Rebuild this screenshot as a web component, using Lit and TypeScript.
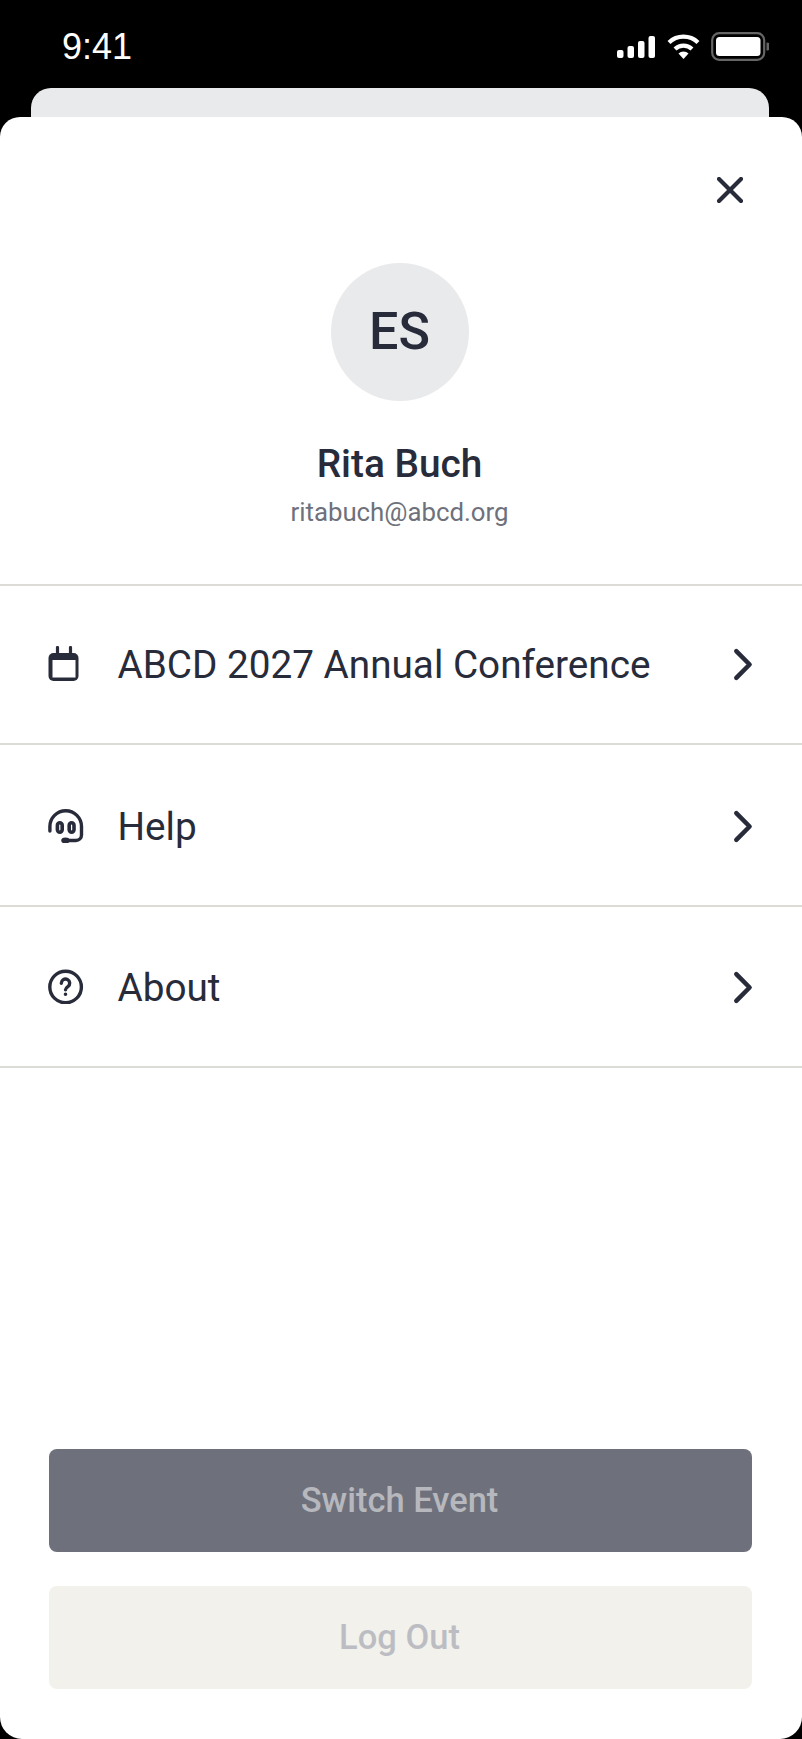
import { LitElement, html, css } from "lit";
import { customElement } from "lit/decorators.js";

const chevron = html`<svg class="chev" width="22" height="33" viewBox="0 0 22 33" fill="none" stroke="#282b3a" stroke-width="4.5" stroke-linecap="round" stroke-linejoin="round"><path d="M4.3 3.2L17.6 16.5L4.3 29.8"/></svg>`;

const icons = {
  calendar: html`<svg width="36" height="36" viewBox="0 0 36 36" fill="none"><path d="M9.5 1.5V9M22.5 1.5V9" stroke="#282b3a" stroke-width="3.2" stroke-linecap="round"/><rect x="0.5" y="7" width="30" height="28" rx="5" fill="#282b3a"/><rect x="4.5" y="14" width="23" height="17.5" fill="#fff"/></svg>`,
  headset: html`<svg width="36" height="36" viewBox="0 0 36 36" fill="none" stroke="#282b3a" stroke-width="3.4" stroke-linecap="round"><path d="M1.9 24V19.5a15.8 15.8 0 0 1 31.6 0V28a5.5 5.5 0 0 1-5.5 5.5H18"/><rect x="9.4" y="15.8" width="4.8" height="9.4" rx="2.4" stroke-width="3.6"/><rect x="21.2" y="15.8" width="4.8" height="9.4" rx="2.4" stroke-width="3.6"/><ellipse cx="17.5" cy="33.5" rx="2.8" ry="1.4" fill="#282b3a" stroke-width="3"/></svg>`,
  help: html`<svg width="36" height="36" viewBox="0 0 36 36" fill="none" stroke="#282b3a" stroke-width="3.4" stroke-linecap="round" stroke-linejoin="round"><circle cx="17.6" cy="19" r="15.8"/><path d="M13.3 15.2a4.2 4.2 0 1 1 6.6 3.4c-1.4 1-2.4 1.7-2.4 3.2"/><circle cx="17.5" cy="26.2" r="1" fill="#282b3a" stroke-width="1.6"/></svg>`,
};

@customElement("app-root")
export class AppRoot extends LitElement {
  static styles = css`
    :host { display: block; width: 802px; height: 1739px; background: #000; font-family: Roboto, "Noto Sans", sans-serif; color: #282b3a; overflow: hidden; }
    .status { height: 88px; box-sizing: border-box; padding: 27px 33px 0 62px; display: flex; justify-content: space-between; align-items: flex-start; color: #fff; }
    .time { font-family: "Liberation Sans", Arial, sans-serif; font-size: 36px; line-height: 40px; }
    .status-icons { display: flex; align-items: center; gap: 11.5px; padding-top: 5px; }
    .back { height: 29px; margin: 0 33px 0 31px; background: #e9eaec; border-radius: 20px 20px 0 0; }
    .sheet { height: 1622px; background: #fff; border-radius: 20px 20px 22px 22px; display: flex; flex-direction: column; }
    .close-row { display: flex; justify-content: flex-end; padding: 60px 59px 0 0; height: 26px; }
    .profile { display: flex; flex-direction: column; align-items: center; padding: 59.5px 3px 0 0; height: 321.5px; box-sizing: content-box; border-bottom: 2px solid #dddbd6; }
    .avatar { width: 138px; height: 138px; border-radius: 50%; background: #e9eaec; display: flex; align-items: center; justify-content: center; font-size: 52px; font-weight: 500; }
    .name { margin-top: 39.5px; font-size: 38.8px; line-height: 48px; font-weight: 500; }
    .email { margin-top: 6px; font-size: 25.8px; line-height: 36px; color: #6e717b; }
    .row { height: 160px; border-bottom: 2px solid #dddbd6; display: flex; align-items: center; padding: 0 48px; }
    .row:nth-child(3) { height: 156.5px; }
    .row:nth-child(4) .label, .row:nth-child(4) .chev { margin-top: 4px; }
    .row:nth-child(5) { height: 159.5px; }
    .row:nth-child(5) .label, .row:nth-child(5) .chev { margin-top: 2px; }
    .row svg:first-child { flex: none; }
    .label { flex: 1; margin-left: 33.5px; font-size: 38.7px; }
    .actions { margin-top: auto; padding: 0 50px 50px 49px; display: flex; flex-direction: column; gap: 34px; }
    .btn { height: 103px; box-sizing: border-box; padding: 0 2px 2px 0; border-radius: 8px; display: flex; align-items: center; justify-content: center; font-size: 34.5px; font-weight: 500; }
    .primary { background: #6e717b; color: #b7b8be; }
    .secondary { background: #f2f1ec; color: #bcbdc3; }
  `;

  render() {
    const rows = [
      ["calendar", "ABCD 2027 Annual Conference"],
      ["headset", "Help"],
      ["help", "About"],
    ] as const;
    return html`
      <div class="status">
        <span class="time">9:41</span>
        <div class="status-icons">
          <svg width="38" height="22" viewBox="0 0 38 22" fill="#fff"><rect x="0" y="14" width="6.5" height="8" rx="2"/><rect x="10.5" y="10" width="6.5" height="12" rx="2"/><rect x="21" y="5" width="6.5" height="17" rx="2"/><rect x="31.5" y="0" width="6.5" height="22" rx="2"/></svg>
          <svg width="33" height="26" viewBox="0 0 33 26" fill="none" stroke="#fff" stroke-width="4.2"><path d="M2 8.5a21 21 0 0 1 29 0"/><path d="M8 15a12.5 12.5 0 0 1 17 0"/><path d="M16.5 25l-5-5.5a7 7 0 0 1 10 0z" fill="#fff" stroke="none"/></svg>
          <svg width="58" height="29" viewBox="0 0 58 29" fill="none"><rect x="1.2" y="1.2" width="52" height="26.6" rx="7" stroke="#666" stroke-width="2.2"/><rect x="5" y="5" width="44.5" height="19" rx="3.5" fill="#fff"/><path d="M55.5 10.5a4 4 0 0 1 0 8z" fill="#666"/></svg>
        </div>
      </div>
      <div class="back"></div>
      <div class="sheet">
        <div class="close-row">
          <svg width="26" height="26" viewBox="0 0 26 26" fill="none" stroke="#282b3a" stroke-width="4.2" stroke-linecap="round"><path d="M2 2L24 24M24 2L2 24"/></svg>
        </div>
        <div class="profile">
          <div class="avatar">ES</div>
          <div class="name">Rita Buch</div>
          <div class="email">ritabuch@abcd.org</div>
        </div>
        ${rows.map(([icon, label]) => html`<div class="row">${icons[icon]}<span class="label">${label}</span>${chevron}</div>`)}
        <div class="actions">
          <div class="btn primary">Switch Event</div>
          <div class="btn secondary">Log Out</div>
        </div>
      </div>
    `;
  }
}
